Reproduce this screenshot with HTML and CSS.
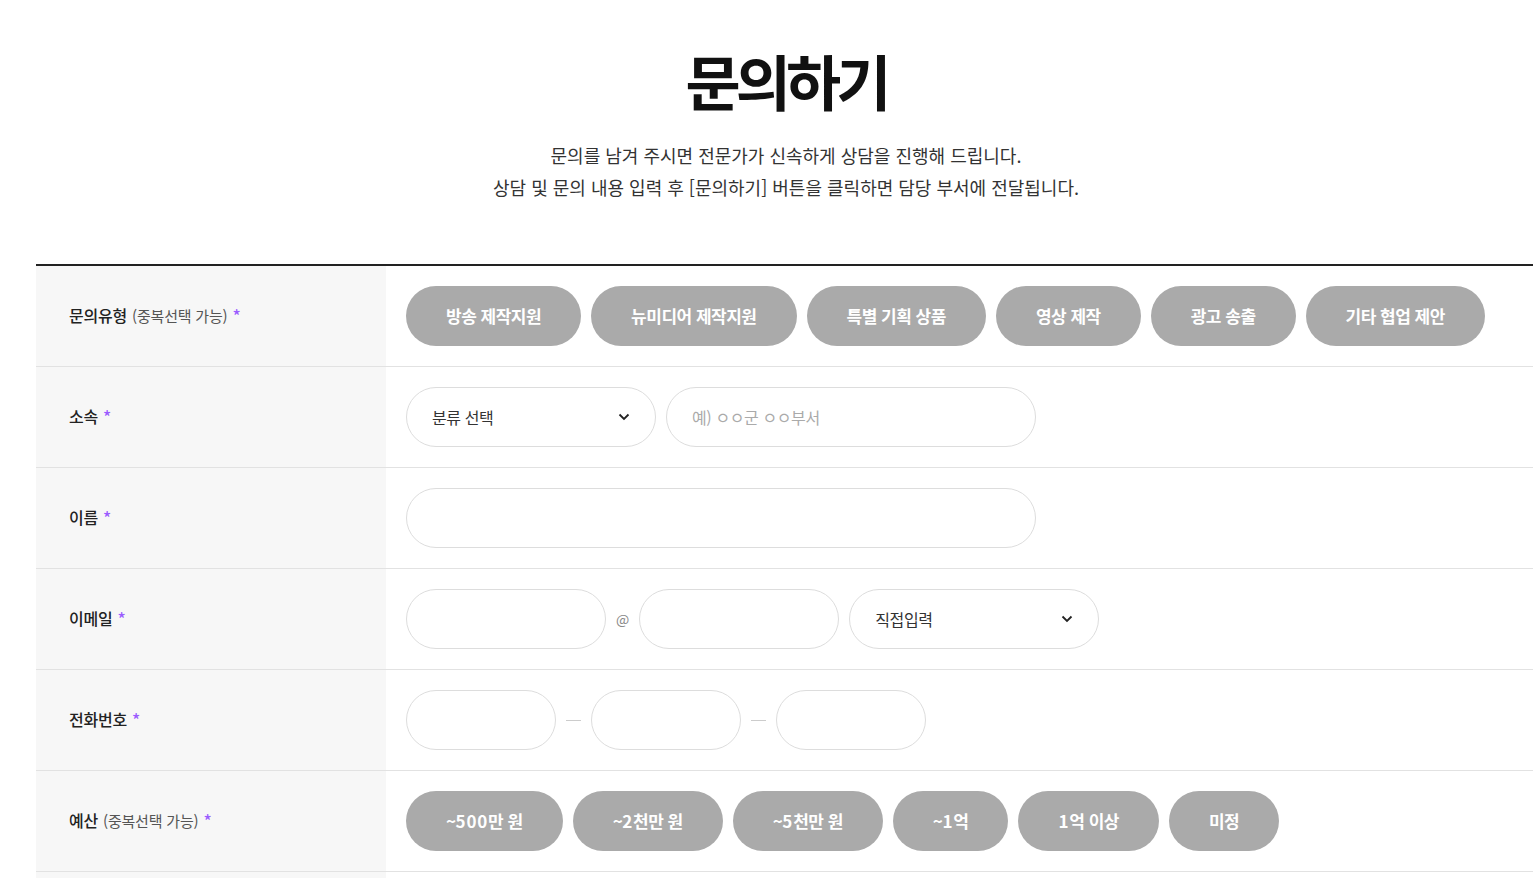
FILE: index.html
```html
<!DOCTYPE html>
<html lang="ko">
<head>
    <meta charset="utf-8">
    <title>문의하기</title>
    <link rel="stylesheet" href="styles.css">
</head>
<body>
    <div class="wrap">
        <div class="intro">
            <h1 class="title">문의하기</h1>
            <p class="desc">문의를 남겨 주시면 전문가가 신속하게 상담을 진행해 드립니다.<br>
            상담 및 문의 내용 입력 후 [문의하기] 버튼을 클릭하면 담당 부서에 전달됩니다.</p>
        </div>

        <div class="form-table">
            <!-- 문의유형 -->
            <div class="row">
                <div class="label">문의유형 <span class="sub">(중복선택 가능)</span> <span class="req">*</span></div>
                <div class="field">
                    <button class="chip">방송 제작지원</button>
                    <button class="chip">뉴미디어 제작지원</button>
                    <button class="chip">특별 기획 상품</button>
                    <button class="chip">영상 제작</button>
                    <button class="chip">광고 송출</button>
                    <button class="chip">기타 협업 제안</button>
                </div>
            </div>

            <div class="row">
                <div class="label">소속 <span class="req">*</span></div>
                <div class="field">
                    <div class="select w250">
                        <span>분류 선택</span>
                        <svg class="chev" width="12" height="8" viewBox="0 0 12 8"><path d="M1.5 1.5 6 6l4.5-4.5" fill="none" stroke="#222" stroke-width="1.8"/></svg>
                    </div>
                    <input class="input w370" type="text" placeholder="예) ㅇㅇ군 ㅇㅇ부서">
                </div>
            </div>

            <div class="row">
                <div class="label">이름 <span class="req">*</span></div>
                <div class="field">
                    <input class="input w630" type="text">
                </div>
            </div>

            <div class="row">
                <div class="label">이메일 <span class="req">*</span></div>
                <div class="field">
                    <input class="input w200" type="text">
                    <span class="at">@</span>
                    <input class="input w200" type="text">
                    <div class="select w250">
                        <span>직접입력</span>
                        <svg class="chev" width="12" height="8" viewBox="0 0 12 8"><path d="M1.5 1.5 6 6l4.5-4.5" fill="none" stroke="#222" stroke-width="1.8"/></svg>
                    </div>
                </div>
            </div>

            <div class="row">
                <div class="label">전화번호 <span class="req">*</span></div>
                <div class="field">
                    <input class="input w150" type="text">
                    <span class="dash"></span>
                    <input class="input w150" type="text">
                    <span class="dash"></span>
                    <input class="input w150" type="text">
                </div>
            </div>

            <div class="row">
                <div class="label">예산 <span class="sub">(중복선택 가능)</span> <span class="req">*</span></div>
                <div class="field">
                    <button class="chip">~<span class="num">500</span>만 원</button>
                    <button class="chip">~<span class="num">2</span>천만 원</button>
                    <button class="chip">~<span class="num">5</span>천만 원</button>
                    <button class="chip">~<span class="num">1</span>억</button>
                    <button class="chip"><span class="num">1</span>억 이상</button>
                    <button class="chip">미정</button>
                </div>
            </div>

            <div class="row row-tall">
                <div class="label">문의내용 <span class="req">*</span></div>
                <div class="field">
                    <textarea class="textarea"></textarea>
                </div>
            </div>
        </div>
    </div>
</body>
</html>
```

FILE: styles.css
```css
html, body {
    margin: 0;
    padding: 0;
    background-color: #ffffff;
    color: #222222;
    font-family: "Noto Sans CJK KR", "Noto Sans", sans-serif;
    overflow-x: hidden;
}

.wrap {
    width: 1500px;
    margin-left: 36px;
}

/* Intro */
.intro {
    text-align: center;
    padding-top: 40px;
    padding-bottom: 61px;
}

.title {
    margin: 0;
    font-size: 60px;
    font-weight: 700;
    line-height: 80px;
    letter-spacing: -5px;
    color: #111111;
}

.desc {
    margin: 19px 0 0;
    font-size: 18px;
    line-height: 32px;
    letter-spacing: 0;
    color: #333333;
}

/* Form table */
.form-table {
    border-top: 2px solid #222222;
}

.row {
    display: flex;
    height: 100px;
    border-bottom: 1px solid #e2e2e2;
}

.label {
    width: 350px;
    flex-shrink: 0;
    box-sizing: border-box;
    padding-left: 33px;
    padding-bottom: 2px;
    background-color: #f7f7f7;
    display: flex;
    align-items: center;
    gap: 5px;
    font-size: 16px;
    font-weight: 500;
    letter-spacing: -0.2px;
    color: #222222;
}

.label .sub {
    font-size: 15px;
    font-weight: 400;
    color: #555555;
}

.label .req {
    color: #9b5cff;
    font-size: 17px;
    font-weight: 500;
}

.field {
    display: flex;
    align-items: center;
    gap: 10px;
    padding-left: 20px;
}

.row-tall {
    height: auto;
}

.row-tall .label {
    align-items: flex-start;
    padding-top: 36px;
}

.row-tall .field {
    align-items: flex-start;
    padding-top: 20px;
    padding-bottom: 20px;
}

/* Pill buttons */
.chip {
    height: 60px;
    padding: 0 40px 2px;
    border: none;
    border-radius: 30px;
    background-color: #aaaaaa;
    color: #ffffff;
    font-family: inherit;
    font-size: 17px;
    font-weight: 700;
    letter-spacing: -0.5px;
    white-space: nowrap;
}

.chip .num {
    letter-spacing: 0.8px;
}

/* Inputs */
.input,
.select {
    height: 60px;
    box-sizing: border-box;
    border: 1px solid #dddddd;
    border-radius: 30px;
    background-color: #ffffff;
    padding: 0 25px;
    font-family: inherit;
    font-size: 16px;
    letter-spacing: -0.4px;
    color: #333333;
}

.input::placeholder {
    color: #aaaaaa;
}

.select {
    display: flex;
    align-items: center;
    justify-content: space-between;
    padding-right: 25px;
}

.chev {
    display: block;
}

.w150 { width: 150px; }
.w200 { width: 200px; }
.w250 { width: 250px; }
.w370 { width: 370px; }
.w630 { width: 630px; }

.at {
    font-size: 14px;
    color: #888888;
}

.dash {
    display: block;
    width: 15px;
    height: 1px;
    background-color: #cccccc;
}

.textarea {
    width: 1050px;
    height: 200px;
    box-sizing: border-box;
    border: 1px solid #dddddd;
    border-radius: 20px;
    resize: none;
}
```
